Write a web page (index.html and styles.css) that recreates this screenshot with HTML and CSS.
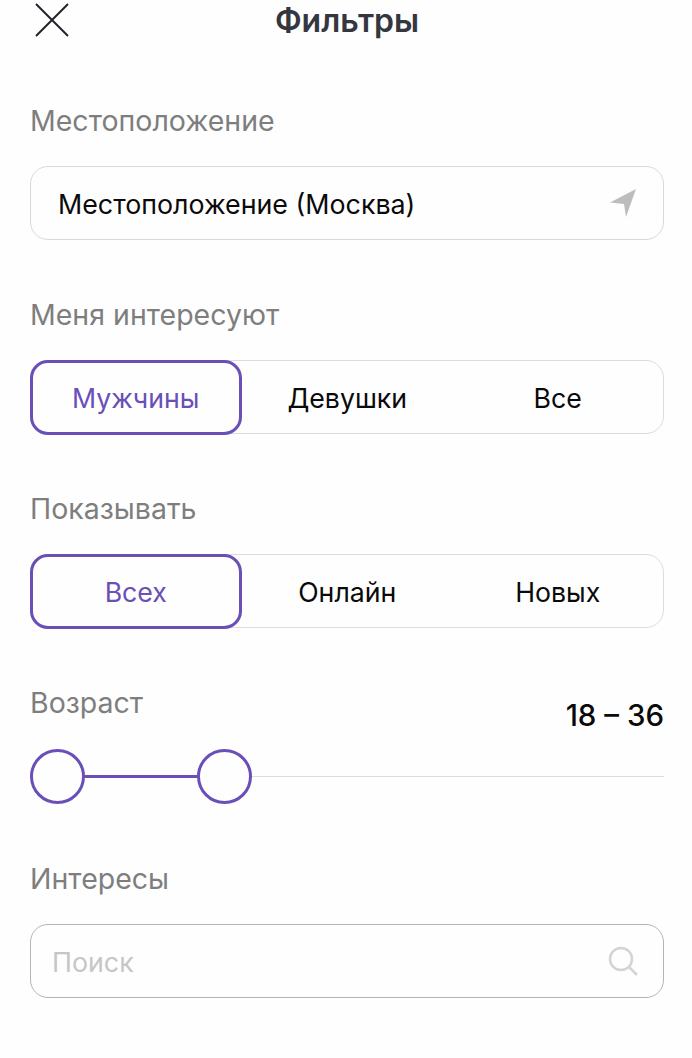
FILE: index.html
```html
<!DOCTYPE html>
<html lang="ru">
<head>
<meta charset="utf-8">
<title>Фильтры</title>
<link rel="stylesheet" href="styles.css">
</head>
<body>
<main class="page">
  <header class="header">
    <svg class="close" width="36" height="36" viewBox="0 0 36 36"><path d="M2 2 L34 34 M34 2 L2 34"/></svg>
    <h1 class="title">Фильтры</h1>
  </header>

  <section class="section first">
    <div class="label">Местоположение</div>
    <div class="field">
      <span class="field-text">Местоположение (Москва)</span>
      <svg class="field-icon" width="30" height="32" viewBox="0 0 30 32"><path class="fill" d="M28 2 L2 15.5 L16 17 L18 30 Z"/></svg>
    </div>
  </section>

  <section class="section">
    <div class="label">Меня интересуют</div>
    <div class="segments">
      <div class="segment active">Мужчины</div>
      <div class="segment">Девушки</div>
      <div class="segment">Все</div>
    </div>
  </section>

  <section class="section">
    <div class="label">Показывать</div>
    <div class="segments">
      <div class="segment active">Всех</div>
      <div class="segment">Онлайн</div>
      <div class="segment">Новых</div>
    </div>
  </section>

  <section class="section age">
    <div class="age-head">
      <div class="label">Возраст</div>
      <div class="age-value">18 – 36</div>
    </div>
    <div class="slider">
      <span class="thumb"></span>
      <span class="track-on"></span>
      <span class="thumb"></span>
      <span class="track-off"></span>
    </div>
  </section>

  <section class="section">
    <div class="label">Интересы</div>
    <div class="field search">
      <span class="field-text placeholder">Поиск</span>
      <svg class="field-icon" width="30" height="30" viewBox="0 0 30 30"><circle class="stroke" cx="13" cy="13" r="11"/><path class="stroke" d="M21 21 L29 29"/></svg>
    </div>
  </section>
</main>
</body>
</html>
```
FILE: styles.css
```css
* { box-sizing: border-box; }
html, body { margin: 0; padding: 0; background: #fefefe; }
body { font-family: Inter, "Noto Sans", sans-serif; color: #000; }
.page { width: 692px; height: 1058px; padding: 0 28px 0 30px; overflow: hidden; }

.header { position: relative; height: 43px; display: flex; justify-content: center; align-items: flex-start; }
.close { position: absolute; left: 4px; top: 2px; }
.close path { stroke: #22242c; stroke-width: 2; fill: none; }
.title { margin: 0; font-size: 32px; font-weight: 600; line-height: 42px; color: #343640; }

.section { height: 194px; }
.first { margin-top: 61px; }
.label { height: 34px; line-height: 34px; font-size: 28.5px; font-weight: 400; color: #7e7e7e; margin-bottom: 28px; }

.field { height: 74px; border: 1.5px solid #d9d9d9; border-radius: 18px; display: flex; align-items: center; justify-content: space-between; padding: 0 25px 0 27px; background: #fefefe; }
.field-text { font-size: 26.8px; line-height: 34px; padding-top: 2px; color: #0a0a0a; }
.placeholder { color: #c6c6c6; margin-left: -6px; }
.search { border-color: #b4b4b4; }
.fill { fill: #bdbdbd; }
.stroke { fill: none; stroke: #d4d4d4; stroke-width: 2.5; }

.segments { height: 74px; border: 1.5px solid #dcdcdc; border-radius: 18px; display: grid; grid-template-columns: 211px 1fr 1fr; }
.segment { display: flex; align-items: center; justify-content: center; padding-top: 2px; font-size: 26.7px; color: #0a0a0a; }
.active { margin: -1.5px 0 -1.5px -1.5px; border: 3px solid #6a4fb8; border-radius: 18px; color: #6a4fb8; background: #fefefe; }

.age { height: 176px; }
.age-head { display: flex; justify-content: space-between; align-items: flex-start; height: 63px; }
.age-value { margin-top: 11px; font-size: 29.5px; line-height: 36px; font-weight: 500; color: #0a0a0a; }
.slider { display: flex; align-items: center; height: 55px; }
.thumb { flex: none; width: 55px; height: 55px; border: 3px solid #6a4fb8; border-radius: 50%; background: #fefefe; }
.track-on { flex: none; width: 112px; height: 3px; background: #6a4fb8; }
.track-off { flex: 1; height: 1.5px; background: #dcdcdc; }
```
